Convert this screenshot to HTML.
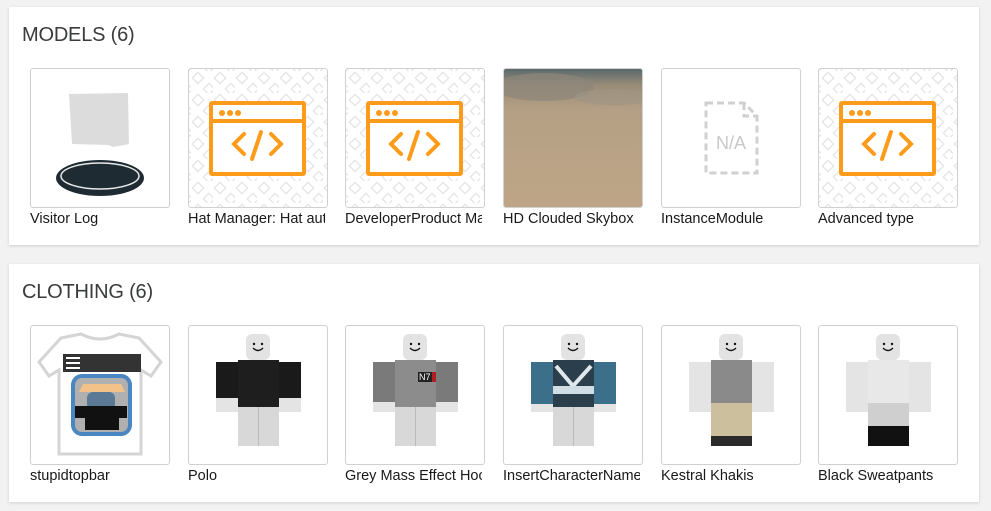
<!DOCTYPE html>
<html><head><meta charset="utf-8"><style>
body{margin:0;background:#f2f2f2;width:991px;height:511px;position:relative;font-family:"Liberation Sans",sans-serif;overflow:hidden}
.card{position:absolute;left:9px;width:970px;height:238px;background:#fff;box-shadow:0 1px 3px rgba(0,0,0,.15)}
.title{position:absolute;left:13px;top:17px;font-size:20px;color:#393b3d;letter-spacing:-.2px}
.item{position:absolute;top:61px;width:140px}
.thumb{width:138px;height:138px;border:1px solid #d0d0d0;border-radius:3px;overflow:hidden;background:#fff;position:relative}
.thumb svg{position:absolute;left:0;top:0}
.lbl{font-size:14.5px;color:#191919;margin-top:3px;white-space:nowrap;overflow:hidden;width:137px}
</style></head><body>
<svg width="0" height="0" style="position:absolute"><defs>
<pattern id="pt" width="22" height="22" patternUnits="userSpaceOnUse" patternTransform="translate(2,2)">
<rect x="3" y="3" width="8" height="8" transform="rotate(45 7 7)" fill="none" stroke="#e6e6e6" stroke-width="1.4"/>
<rect x="14" y="14" width="8" height="8" transform="rotate(45 18 18)" fill="none" stroke="#e6e6e6" stroke-width="1.4"/>
</pattern>
<linearGradient id="sky" x1="0" y1="0" x2="0" y2="1">
<stop offset="0" stop-color="#5a6a6c"/><stop offset=".12" stop-color="#9a8c78"/><stop offset=".3" stop-color="#b5a085"/><stop offset="1" stop-color="#bea586"/>
</linearGradient>
<g id="code">
<rect width="138" height="138" fill="url(#pt)"/>
<rect x="22" y="34" width="93" height="71" fill="#fff" stroke="#ff9b1a" stroke-width="4" rx="1"/>
<line x1="22" y1="52" x2="115" y2="52" stroke="#ff9b1a" stroke-width="4"/>
<circle cx="33" cy="44" r="3" fill="#ff9b1a"/><circle cx="41" cy="44" r="3" fill="#ff9b1a"/><circle cx="49" cy="44" r="3" fill="#ff9b1a"/>
<polyline points="55,65 45,75 55,85" fill="none" stroke="#ff9b1a" stroke-width="4" stroke-linecap="round"/>
<polyline points="82,65 92,75 82,85" fill="none" stroke="#ff9b1a" stroke-width="4" stroke-linecap="round"/>
<line x1="72" y1="63" x2="63" y2="90" stroke="#ff9b1a" stroke-width="4" stroke-linecap="round"/>
</g>
<g id="av">
<rect x="57" y="8" width="24" height="26" rx="6" fill="#e3e3e3"/>
<path d="M64 22 q5 5 10 0" fill="none" stroke="#111" stroke-width="1.3"/>
<circle cx="65" cy="18" r="1.2" fill="#111"/><circle cx="73" cy="18" r="1.2" fill="#111"/>
<rect x="49" y="77" width="41" height="43" fill="#d8d8d8"/>
<line x1="69.5" y1="80" x2="69.5" y2="120" stroke="#bbb"/>
<rect x="27" y="36" width="22" height="50" fill="#e4e4e4"/>
<rect x="90" y="36" width="22" height="50" fill="#e4e4e4"/>
<rect x="49" y="34" width="41" height="45" fill="#e8e8e8"/>
</g>
</defs></svg>

<div class="card" style="top:7px">
<div class="title">MODELS (6)</div>
<div class="item" style="left:21px"><div class="thumb"><svg width="138" height="138">
<path d="M38 25 L97 24 L98 75 L82 78 L78 76 L41 75 Z" fill="#dcdcdc"/>
<ellipse cx="69" cy="109" rx="44" ry="18" fill="#1e2b33"/>
<ellipse cx="69" cy="107" rx="39" ry="13" fill="none" stroke="#e8e8e8" stroke-width="1.5"/>
</svg></div><div class="lbl">Visitor Log</div></div>
<div class="item" style="left:179px"><div class="thumb"><svg width="138" height="138"><use href="#code"/></svg></div><div class="lbl">Hat Manager: Hat auto</div></div>
<div class="item" style="left:336px"><div class="thumb"><svg width="138" height="138"><use href="#code"/></svg></div><div class="lbl">DeveloperProduct Manager</div></div>
<div class="item" style="left:494px"><div class="thumb"><svg width="138" height="138"><rect width="138" height="138" fill="url(#sky)"/>
<ellipse cx="40" cy="18" rx="50" ry="14" fill="#8d867a" opacity=".7"/><ellipse cx="110" cy="28" rx="40" ry="8" fill="#a09483" opacity=".7"/></svg></div><div class="lbl">HD Clouded Skybox</div></div>
<div class="item" style="left:652px"><div class="thumb"><svg width="138" height="138">
<path d="M44 34 H82 L95 47 V104 H44 Z M82 34 V47 H95" fill="none" stroke="#d0d0d0" stroke-width="3" stroke-dasharray="7 4"/>
<text x="69" y="80" text-anchor="middle" font-family="Liberation Sans" font-size="18" fill="#c8c8c8">N/A</text>
</svg></div><div class="lbl">InstanceModule</div></div>
<div class="item" style="left:809px"><div class="thumb"><svg width="138" height="138"><use href="#code"/></svg></div><div class="lbl">Advanced type</div></div>
</div>

<div class="card" style="top:264px">
<div class="title">CLOTHING (6)</div>
<div class="item" style="left:21px"><div class="thumb"><svg width="138" height="138">
<path d="M30 12 L50 8 Q69 18 88 8 L108 12 L130 36 L120 50 L110 44 L110 128 L28 128 L28 44 L18 50 L8 36 Z" fill="none" stroke="#d4d4d4" stroke-width="3"/>
<rect x="32" y="28" width="78" height="18" fill="#333"/>
<g stroke="#fff" stroke-width="2"><line x1="35" y1="32" x2="49" y2="32"/><line x1="35" y1="37" x2="49" y2="37"/><line x1="35" y1="42" x2="49" y2="42"/></g>
<rect x="42" y="50" width="57" height="58" rx="9" fill="#b0b0b0" stroke="#4a86c0" stroke-width="4"/>
<path d="M52 58 L90 58 L94 66 L48 66 Z" fill="#f2c288"/>
<rect x="56" y="66" width="28" height="18" rx="6" fill="#5b7894"/>
<rect x="44" y="80" width="52" height="12" fill="#111"/>
<rect x="54" y="92" width="34" height="12" fill="#111"/>
</svg></div><div class="lbl">stupidtopbar</div></div>
<div class="item" style="left:179px"><div class="thumb"><svg width="138" height="138"><use href="#av"/>
<rect x="27" y="36" width="22" height="36" fill="#1a1a1a"/><rect x="90" y="36" width="22" height="36" fill="#1a1a1a"/><rect x="49" y="34" width="41" height="47" fill="#1e1e1e"/></svg></div><div class="lbl">Polo</div></div>
<div class="item" style="left:336px"><div class="thumb"><svg width="138" height="138"><use href="#av"/>
<rect x="27" y="36" width="22" height="40" fill="#7a7a7a"/><rect x="90" y="36" width="22" height="40" fill="#7a7a7a"/><rect x="49" y="34" width="41" height="47" fill="#8c8c8c"/><rect x="72" y="46" width="14" height="10" fill="#222"/><text x="73" y="54" font-size="9" fill="#fff" font-family="Liberation Sans">N7</text><rect x="86" y="46" width="4" height="10" fill="#b02020"/></svg></div><div class="lbl">Grey Mass Effect Hoodie</div></div>
<div class="item" style="left:494px"><div class="thumb"><svg width="138" height="138"><use href="#av"/>
<rect x="27" y="36" width="22" height="42" fill="#3c6f8a"/><rect x="90" y="36" width="22" height="42" fill="#3c6f8a"/><rect x="49" y="34" width="41" height="47" fill="#2a3e4c"/><path d="M52 40 L69 60 L87 40" stroke="#e0e8ec" stroke-width="4" fill="none"/><rect x="49" y="60" width="41" height="8" fill="#d0dde4"/></svg></div><div class="lbl">InsertCharacterName</div></div>
<div class="item" style="left:652px"><div class="thumb"><svg width="138" height="138"><use href="#av"/>
<rect x="49" y="34" width="41" height="47" fill="#8a8a8a"/><rect x="49" y="77" width="41" height="43" fill="#cbbf9e"/><rect x="49" y="110" width="41" height="10" fill="#2a2a2a"/></svg></div><div class="lbl">Kestral Khakis</div></div>
<div class="item" style="left:809px"><div class="thumb"><svg width="138" height="138"><use href="#av"/>
<rect x="49" y="100" width="41" height="20" fill="#111"/><rect x="49" y="77" width="41" height="23" fill="#cfcfcf"/></svg></div><div class="lbl">Black Sweatpants</div></div>
</div>
</body></html>
